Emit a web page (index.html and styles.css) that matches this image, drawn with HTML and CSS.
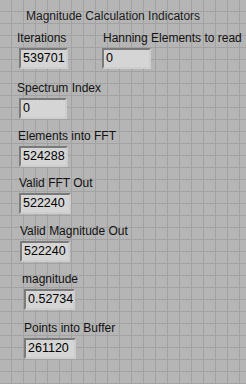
FILE: index.html
```html
<!DOCTYPE html>
<html>
<head>
<meta charset="utf-8">
<link rel="stylesheet" href="styles.css">
</head>
<body>
<div class="panel">
  <div class="title">Magnitude Calculation Indicators</div>
  <div class="row first">
    <div class="ind ind-iter">
      <div class="label">Iterations</div>
      <div class="box w49">539701</div>
    </div>
    <div class="ind ind-hann">
      <div class="label">Hanning Elements to read</div>
      <div class="box w49">0</div>
    </div>
  </div>
  <div class="ind ind-spec">
    <div class="label">Spectrum Index</div>
    <div class="box w48">0</div>
  </div>
  <div class="ind ind-eff">
    <div class="label">Elements into FFT</div>
    <div class="box w49">524288</div>
  </div>
  <div class="ind ind-vfft">
    <div class="label">Valid FFT Out</div>
    <div class="box w52">522240</div>
  </div>
  <div class="ind ind-vmo">
    <div class="label">Valid Magnitude Out</div>
    <div class="box w50">522240</div>
  </div>
  <div class="ind ind-mag">
    <div class="label">magnitude</div>
    <div class="box w51 clip">0.527344</div>
  </div>
  <div class="ind ind-pib">
    <div class="label">Points into Buffer</div>
    <div class="box w52">261120</div>
  </div>
</div>
</body>
</html>
```
FILE: styles.css
```css
html, body {
  margin: 0;
  padding: 0;
}
body {
  width: 246px;
  height: 384px;
  overflow: hidden;
  background-color: #b5b5b5;
  background-image:
    linear-gradient(to right, #a2a2a2 1px, transparent 1px),
    linear-gradient(to bottom, #a2a2a2 1px, transparent 1px);
  background-size: 12px 12px;
  background-position: 11px 11px;
  font-family: "Liberation Sans", Arial, sans-serif;
  font-size: 12px;
  color: #111;
}
.panel {
  display: flex;
  flex-direction: column;
  align-items: flex-start;
  padding-top: 9px;
}
.title {
  margin-left: 26px;
  line-height: 14px;
  color: #1a1a1a;
}
.row {
  display: flex;
}
.row.first {
  margin-top: 8px;
}
.ind {
  display: flex;
  flex-direction: column;
  align-items: flex-start;
}
.label {
  line-height: 14px;
  white-space: nowrap;
}
.box {
  box-sizing: border-box;
  height: 21px;
  margin-top: 3px;
  padding-left: 2px;
  line-height: 17px;
  background: #d5d5d5;
  border: 2px solid;
  border-color: #7a7a7a #cdcdcd #cdcdcd #7a7a7a;
  color: #000;
  font-size: 12.5px;
  white-space: nowrap;
  overflow: hidden;
}
.clip { text-overflow: clip; }
.w48 { width: 48px; }
.w49 { width: 49px; }
.w50 { width: 50px; }
.w51 { width: 51px; }
.w52 { width: 52px; }

.ind-iter { margin-left: 17px; width: 86px; }
.ind-iter .box { margin-left: 2px; }
.ind-hann .box { margin-left: -1px; }
.ind-spec { margin-left: 17px; margin-top: 12px; }
.ind-spec .box { margin-left: 2px; }
.ind-eff { margin-left: 18px; margin-top: 10px; }
.ind-eff .box { margin-left: 1px; }
.ind-vfft { margin-left: 19px; margin-top: 9px; }
.ind-vmo { margin-left: 20px; margin-top: 10px; }
.ind-mag { margin-left: 22px; margin-top: 10px; }
.ind-mag .box { margin-left: 2px; }
.ind-pib { margin-left: 24px; margin-top: 11px; }
```
